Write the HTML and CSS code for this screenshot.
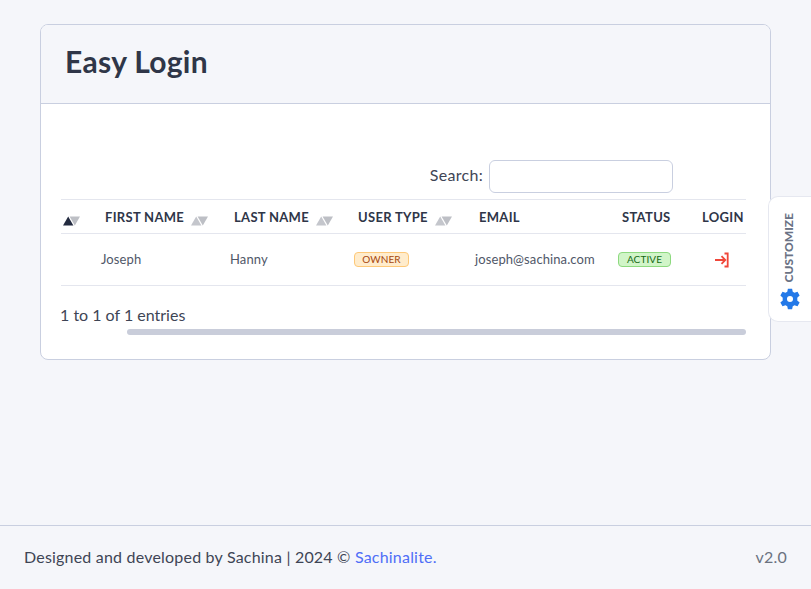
FILE: index.html
```html
<!DOCTYPE html>
<html lang="en">
<head>
  <meta charset="UTF-8" />
  <meta name="viewport" content="width=device-width, initial-scale=1.0"/>
  <title>Easy Login</title>
  <link rel="stylesheet" href="styles.css">
</head>
<body>
  <main class="content">
    <section class="card">
      <div class="card-header">
        <h1>Easy Login</h1>
      </div>
      <div class="card-body">
        <div class="search-row">
          <label for="search">Search:</label>
          <input type="text" id="search" />
        </div>
        <table class="users">
          <colgroup>
            <col class="col-id"><col class="col-first"><col class="col-last"><col class="col-type"><col class="col-email"><col class="col-status"><col class="col-login">
          </colgroup>
          <thead>
            <tr>
              <th class="sort-only"><svg class="sort" viewBox="0 0 17 10"><polygon class="up active" points="0,9.5 5.2,0.5 10.4,9.5"/><polygon class="down" points="6.6,0.5 17,0.5 11.8,9.5"/></svg></th>
              <th>First Name<svg class="sort" viewBox="0 0 17 10"><polygon class="up" points="0,9.5 5.2,0.5 10.4,9.5"/><polygon class="down" points="6.6,0.5 17,0.5 11.8,9.5"/></svg></th>
              <th>Last Name<svg class="sort" viewBox="0 0 17 10"><polygon class="up" points="0,9.5 5.2,0.5 10.4,9.5"/><polygon class="down" points="6.6,0.5 17,0.5 11.8,9.5"/></svg></th>
              <th>User Type<svg class="sort" viewBox="0 0 17 10"><polygon class="up" points="0,9.5 5.2,0.5 10.4,9.5"/><polygon class="down" points="6.6,0.5 17,0.5 11.8,9.5"/></svg></th>
              <th>Email</th>
              <th>Status</th>
              <th>Login</th>
            </tr>
          </thead>
          <tbody>
            <tr>
              <td></td>
              <td>Joseph</td>
              <td>Hanny</td>
              <td><span class="badge badge-owner">Owner</span></td>
              <td>joseph@sachina.com</td>
              <td><span class="badge badge-active">Active</span></td>
              <td class="login-cell">
                <svg class="login-icon" viewBox="0 0 16 16"><path d="M1 8h10M7.500 4.200 11.300 8l-3.800 3.800M10.500 1.500h3.200v13h-3.200"/></svg>
              </td>
            </tr>
          </tbody>
        </table>
        <div class="entries">1 to 1 of 1 entries</div>
        <div class="scrollbar"></div>
      </div>
    </section>
  </main>

  <aside class="customize">
    <span class="customize-label">Customize</span>
    <svg class="gear" viewBox="0 0 24 24"><path fill-rule="evenodd" d="M14.300.8H9.700l-.7 3.400a8.500 8.500 0 0 0-1.900 1.100L3.800 4.200 1.500 8.200l2.600 2.300a8.500 8.500 0 0 0 0 3l-2.600 2.300 2.300 4 3.300-1.100a8.500 8.500 0 0 0 1.900 1.100l.7 3.400h4.600l.7-3.400a8.500 8.500 0 0 0 1.900-1.100l3.300 1.100 2.300-4-2.600-2.300a8.500 8.500 0 0 0 0-3l2.600-2.300-2.300-4-3.300 1.100a8.500 8.500 0 0 0-1.900-1.100zM12 8.700a3.300 3.300 0 1 1 0 6.600 3.300 3.300 0 0 1 0-6.600z"/></svg>
  </aside>

  <footer class="footer">
    <span>Designed and developed by Sachina | 2024 © <a href="#">Sachinalite.</a></span>
    <span class="version">v2.0</span>
  </footer>
</body>
</html>
```

FILE: styles.css
```css
:root {
  --background: #f5f6fa;
  --border: #c9cfe0;
  --line: #e4e6ee;
  --text: #3e4555;
  --heading: #2f3648;
}

* {
  box-sizing: border-box;
}

body {
  margin: 0;
  min-height: 100vh;
  display: flex;
  flex-direction: column;
  background: var(--background);
  color: var(--text);
  font-family: "Lato", "Open Sans", sans-serif;
  font-size: 16px;
  letter-spacing: 0.2px;
}

.content {
  flex: 1;
  padding: 24px 40px 0;
}

.card {
  border: 1px solid var(--border);
  border-radius: 8px;
  background: #fff;
  overflow: hidden;
}

.card-header {
  height: 79px;
  display: flex;
  align-items: center;
  padding: 0 24px 7px;
  background: var(--background);
  border-bottom: 1px solid var(--border);
}

h1 {
  margin: 0;
  font-size: 30px;
  font-weight: 700;
  letter-spacing: 0.3px;
  color: var(--heading);
}

.card-body {
  padding: 56px 24px 24px 19px;
}

.search-row {
  display: flex;
  justify-content: flex-end;
  align-items: center;
  gap: 6px;
  padding-right: 73px;
  margin-bottom: 6px;
}

.search-row label {
  margin-top: -5px;
  letter-spacing: 0.3px;
}

.search-row input {
  width: 184px;
  height: 33px;
  border: 1px solid var(--border);
  border-radius: 6px;
  background: #fff;
  outline: none;
}

.users {
  width: 685px;
  margin-left: 1px;
  table-layout: fixed;
  border-collapse: collapse;
}

.col-id { width: 32px; }
.col-first { width: 129px; }
.col-last { width: 124px; }
.col-type { width: 121px; }
.col-email { width: 143px; }
.col-status { width: 80px; }

.users th {
  height: 34px;
  padding: 1px 0 0 12px;
  border-top: 1px solid var(--line);
  border-bottom: 1px solid var(--line);
  text-align: left;
  text-transform: uppercase;
  font-size: 13px;
  font-weight: 700;
  letter-spacing: 0.3px;
  color: var(--heading);
  white-space: nowrap;
}

.users th.sort-only {
  padding-left: 2px;
}

.users td {
  height: 52px;
  padding: 0 0 2px 8px;
  border-bottom: 1px solid var(--line);
  font-size: 13px;
  letter-spacing: 0.1px;
  color: #505768;
  white-space: nowrap;
}

.sort {
  width: 17px;
  height: 10px;
  margin-left: 7px;
  vertical-align: -4px;
}

.sort-only .sort {
  margin-left: 0;
}

.up, .down {
  fill: #c4c6cc;
}

.down {
  fill: #bdbfc5;
}

.up.active {
  fill: #232b40;
}

.badge {
  display: inline-block;
  height: 15px;
  line-height: 13px;
  border: 1px solid;
  border-radius: 4px;
  font-size: 10px;
  font-weight: 400;
  text-align: center;
  text-transform: uppercase;
  vertical-align: middle;
}

.badge-owner {
  width: 55px;
  background: #ffeccc;
  border-color: #fdc878;
  color: #a6470c;
}

.badge-active {
  width: 53px;
  background: #d1f5c8;
  border-color: #8dd97f;
  color: #166a16;
}

.users td.login-cell {
  padding: 1px 0 0 24px;
}

.login-icon {
  width: 16px;
  height: 16px;
  fill: none;
  stroke: #f0473a;
  stroke-width: 1.8;
  display: block;
}

.entries {
  margin-top: 19px;
  line-height: 20px;
  letter-spacing: 0;
}

.scrollbar {
  height: 6px;
  margin: 4px 0 0 67px;
  border-radius: 3px;
  background: #c9cdda;
}

.customize {
  position: absolute;
  top: 196px;
  right: 0;
  width: 43px;
  height: 126px;
  display: flex;
  flex-direction: column;
  align-items: center;
  justify-content: flex-end;
  gap: 6px;
  padding: 0 1px 11px 0;
  background: #fff;
  border: 1px solid #e6e8f0;
  border-right: 0;
  border-radius: 10px 0 0 10px;
}

.customize-label {
  writing-mode: vertical-rl;
  transform: rotate(180deg);
  margin-right: 3px;
  text-transform: uppercase;
  font-size: 12px;
  font-weight: 900;
  letter-spacing: 0;
  color: #6b7385;
}

.gear {
  width: 22px;
  height: 22px;
  fill: #2479e8;
}

.footer {
  height: 64px;
  display: flex;
  justify-content: space-between;
  align-items: center;
  padding: 0 24px 3px;
  border-top: 1px solid var(--border);
}

.footer a {
  color: #4f6ef7;
  text-decoration: none;
}

.version {
  color: #6b7280;
}
```
